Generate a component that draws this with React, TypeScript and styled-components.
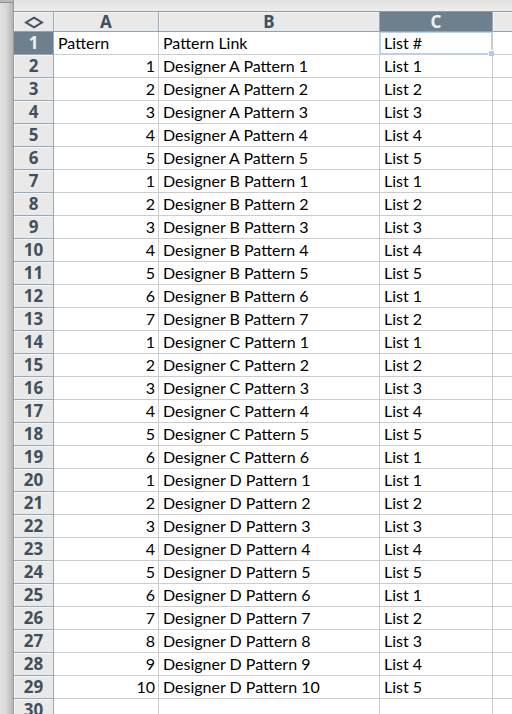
import React from "react";
import styled, { createGlobalStyle, css } from "styled-components";

const GlobalStyle = createGlobalStyle`
  *, *::before, *::after { box-sizing: border-box; }
  body { margin: 0; overflow: hidden; background: #fff; }
`;

const Screen = styled.div`
  display: flex;
  height: 100vh;
  overflow: hidden;
`;

const Gutter = styled.div`
  flex: 0 0 14px;
  border-right: 1px solid #9a9a9a;
  background: linear-gradient(to right, #e2e2e2, #d6d6d6 50%, #b4b4b4);
  &::before {
    content: "";
    display: block;
    height: 3px;
    background: #b9b9b9;
    border-bottom: 1px solid #8c8c8c;
  }
`;

const Workbook = styled.main`
  flex: 1;
  min-width: 0;
`;

const Strip = styled.div`
  height: 12px;
  background: linear-gradient(#e3e3e3, #ececec);
  border-bottom: 1px solid #999;
`;

const Sheet = styled.table`
  width: 100%;
  table-layout: fixed;
  border-collapse: separate;
  border-spacing: 0;
`;

const Col = styled.col<{ $width?: number }>`
  ${(p) => p.$width && css`width: ${p.$width}px;`}
`;

const headerText = css`
  padding: 0;
  font: bold 17px/19px "Noto Sans", "Open Sans", sans-serif;
  text-align: center;
`;

const active = css`
  background: #6e7f8d;
  color: #f1f1f1;
  box-shadow: none;
`;

const idle = css`
  background: #e9e9e9;
  color: #42505d;
  box-shadow: inset 1px 1px #f5f5f5;
`;

const ColumnHeader = styled.th<{ $active?: boolean }>`
  ${headerText}
  height: 20px;
  border-right: 1px solid #9aa9b7;
  border-bottom: 1px solid #93a3b2;
  ${(p) => (p.$active ? active : idle)}
  &:last-child { border-right: 0; }
`;

const RowHeader = styled.th<{ $active?: boolean }>`
  ${headerText}
  height: 23px;
  line-height: 22px;
  border-right: 1px solid #9aa9b7;
  border-bottom: 1px solid #9aa9b7;
  ${(p) => (p.$active ? active : idle)}
`;

const SelectAll = styled.button`
  display: flex;
  width: 100%;
  height: 19px;
  align-items: center;
  justify-content: center;
  padding: 2px 0 0;
  border: 0;
  background: none;
  color: #42505d;
`;

const Cell = styled.td<{ $numeric?: boolean; $selected?: boolean }>`
  position: relative;
  height: 23px;
  padding: 0 3px 0 4px;
  border-right: 1px solid #ccc;
  border-bottom: 1px solid #ccc;
  background: #fff;
  color: #000;
  font: 16px/22px Lato, Carlito, sans-serif;
  text-align: ${(p) => (p.$numeric ? "right" : "left")};
  white-space: nowrap;
  &:last-child { border-right: 0; }
  ${(p) =>
    p.$selected &&
    css`
      z-index: 1;
      box-shadow: inset 0 0 0 1px #b3d3f5, -1px 0 #b3d3f5;
    `}
`;

const FillHandle = styled.span`
  position: absolute;
  right: -2px;
  bottom: -2px;
  width: 6px;
  height: 6px;
  border: 1px solid #fff;
  border-width: 1px 0 0 1px;
  background: #b3cbe4;
`;

const designers = [
  { name: "A", patterns: 5 },
  { name: "B", patterns: 7 },
  { name: "C", patterns: 6 },
  { name: "D", patterns: 10 },
];

const rows = designers.flatMap(({ name, patterns }) =>
  Array.from({ length: patterns }, (_, i) => ({
    pattern: i + 1,
    link: `Designer ${name} Pattern ${i + 1}`,
    list: `List ${(i % 5) + 1}`,
  }))
);

export default function App() {
  return (
    <Screen>
      <GlobalStyle />
      <Gutter />
      <Workbook>
        <Strip />
        <Sheet>
          <colgroup>
            <Col $width={40} />
            <Col $width={105} />
            <Col $width={221} />
            <Col $width={113} />
            <Col />
          </colgroup>
          <thead>
            <tr>
              <ColumnHeader>
                <SelectAll type="button" aria-label="Select all">
                  <svg width="22" height="13" viewBox="0 0 22 13" fill="none" stroke="currentColor" strokeWidth="2">
                    <path d="M11 1.6 L19 6.5 L11 11.4 L3 6.5 Z" />
                  </svg>
                </SelectAll>
              </ColumnHeader>
              <ColumnHeader scope="col">A</ColumnHeader>
              <ColumnHeader scope="col">B</ColumnHeader>
              <ColumnHeader scope="col" $active>C</ColumnHeader>
              <ColumnHeader />
            </tr>
          </thead>
          <tbody>
            <tr>
              <RowHeader scope="row" $active>1</RowHeader>
              <Cell>Pattern</Cell>
              <Cell>Pattern Link</Cell>
              <Cell $selected aria-selected="true">
                List #
                <FillHandle />
              </Cell>
              <Cell />
            </tr>
            {rows.map((row, i) => (
              <tr key={row.link}>
                <RowHeader scope="row">{i + 2}</RowHeader>
                <Cell $numeric>{row.pattern}</Cell>
                <Cell>{row.link}</Cell>
                <Cell>{row.list}</Cell>
                <Cell />
              </tr>
            ))}
            <tr>
              <RowHeader scope="row">{rows.length + 2}</RowHeader>
              <Cell />
              <Cell />
              <Cell />
              <Cell />
            </tr>
          </tbody>
        </Sheet>
      </Workbook>
    </Screen>
  );
}
